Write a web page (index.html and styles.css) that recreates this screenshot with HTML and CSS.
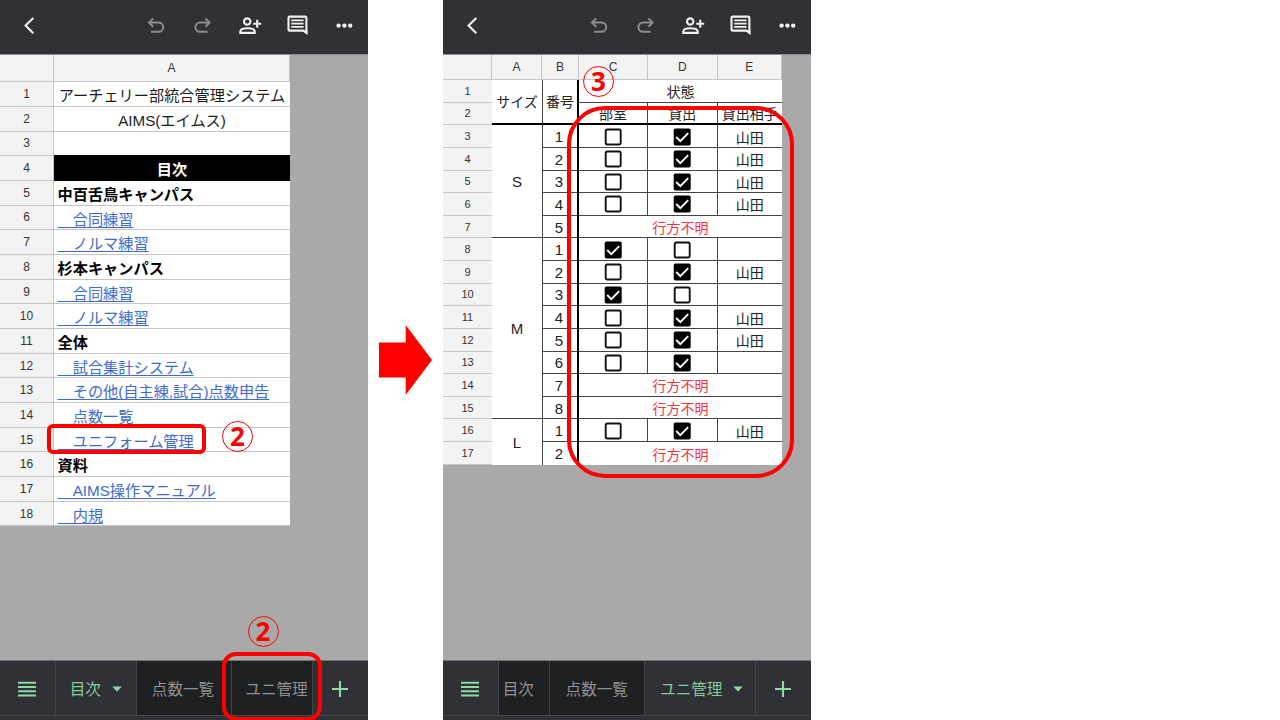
FILE: index.html
```html
<!DOCTYPE html>
<html lang="ja">
<head>
<meta charset="utf-8">
<title>AIMS ユニフォーム管理</title>
<link rel="stylesheet" href="styles.css">
</head>
<body>
<svg class="defs" width="0" height="0">
  <symbol id="tools" viewBox="0 0 368 54">
    <g fill="none" stroke="#f1f1f1" stroke-width="2.1">
      <path d="M33.3 18 25.6 25.6 33.3 33.2"/>
      <g stroke="#8b8c90" stroke-width="2">
        <path d="M153.2 18.4 149 22.6 153.2 26.8M149.4 22.6H158.6A4.6 4.6 0 0 1 158.6 31.8H151"/>
        <path d="M205.4 18.4 209.6 22.6 205.4 26.8M209.2 22.6H200A4.6 4.6 0 0 0 200 31.8H207.6"/>
      </g>
      <circle cx="247.2" cy="21.6" r="3.2"/>
      <path d="M240.3 32.9V31.4C240.3 28.9 244 28.2 247.4 28.2S254.7 28.9 254.7 31.4V32.9Z"/>
      <path d="M257.2 19.7V27.7M253.2 23.7H261.2"/>
      <path d="M289.6 16.6H305.2Q306.4 16.6 306.4 17.8V32.8L303.4 30.6H289.6Q288.5 30.6 288.5 29.4V17.8Q288.5 16.6 289.6 16.6Z"/>
      <path stroke-width="1.7" d="M291.2 20.4H303.6M291.2 23.6H303.6M291.2 26.8H303.6"/>
    </g>
    <path fill="#f1f1f1" d="M302 30.6H307.4V34.8Z"/>
    <g fill="#f1f1f1"><circle cx="338.6" cy="25.6" r="2.2"/><circle cx="344.4" cy="25.6" r="2.2"/><circle cx="350.2" cy="25.6" r="2.2"/></g>
  </symbol>
  <symbol id="list" viewBox="0 0 20 16"><path d="M1 1.8H19M1 6H19M1 10.2H19M1 14.4H19" stroke="#8fd8a7" stroke-width="2"/></symbol>
  <symbol id="plus" viewBox="0 0 18 18"><path d="M9 1V17M1 9H17" stroke="#8fd8a7" stroke-width="2.1"/></symbol>
  <symbol id="caret" viewBox="0 0 10 6"><path d="M.2.4H9.8L5 5.6Z" fill="#8fd8a7"/></symbol>
  <symbol id="off" viewBox="0 0 18 18"><rect x="1.7" y="1.5" width="15" height="15" rx="1.4" fill="#fff" stroke="#111" stroke-width="1.9"/></symbol>
  <symbol id="on" viewBox="0 0 18 18"><rect x=".7" y=".5" width="17" height="17" rx="1.8"/><path d="M3.2 9 7.3 13.1 15.2 5.2" fill="none" stroke="#fff" stroke-width="1.9"/></symbol>
</svg>

<main class="stage">
  <section class="phone">
    <header class="toolbar"><svg width="368" height="54"><use href="#tools"/></svg></header>
    <div class="canvas">
      <div class="index">
        <div class="num"></div><div class="col">A</div>
        <div class="num">1</div><div class="cell center">アーチェリー部統合管理システム</div>
        <div class="num">2</div><div class="cell center">AIMS(エイムス)</div>
        <div class="num">3</div><div class="cell"></div>
        <div class="num">4</div><div class="cell title">目次</div>
        <div class="num">5</div><div class="cell bold">中百舌鳥キャンパス</div>
        <div class="num">6</div><div class="cell"><a>　合同練習</a></div>
        <div class="num">7</div><div class="cell"><a>　ノルマ練習</a></div>
        <div class="num">8</div><div class="cell bold">杉本キャンパス</div>
        <div class="num">9</div><div class="cell"><a>　合同練習</a></div>
        <div class="num">10</div><div class="cell"><a>　ノルマ練習</a></div>
        <div class="num">11</div><div class="cell bold">全体</div>
        <div class="num">12</div><div class="cell"><a>　試合集計システム</a></div>
        <div class="num">13</div><div class="cell"><a>　その他(自主練,試合)点数申告</a></div>
        <div class="num">14</div><div class="cell"><a>　点数一覧</a></div>
        <div class="num">15</div><div class="cell"><a>　ユニフォーム管理</a></div>
        <div class="num">16</div><div class="cell bold">資料</div>
        <div class="num">17</div><div class="cell"><a>　AIMS操作マニュアル</a></div>
        <div class="num">18</div><div class="cell"><a>　内規</a></div>
      </div>
    </div>
    <nav class="tabs tabs-index">
      <div class="tab"><svg width="20" height="16"><use href="#list"/></svg></div>
      <div class="tab active">目次<svg width="10" height="6"><use href="#caret"/></svg></div>
      <div class="tab dark">点数一覧</div>
      <div class="tab dark">ユニ管理</div>
      <div class="tab add"><svg width="18" height="18"><use href="#plus"/></svg></div>
    </nav>
    <div class="mark mark-link"></div>
    <div class="mark mark-tab"></div>
    <div class="step step-link">2</div>
    <div class="step step-tab">2</div>
  </section>

  <div class="between"><svg width="53" height="70" viewBox="0 0 53 70"><path d="M0 17.5H26.7V0L53 35 26.7 70V52.5H0Z" fill="#f00"/></svg></div>

  <section class="phone">
    <header class="toolbar"><svg width="368" height="54"><use href="#tools"/></svg></header>
    <div class="canvas">
      <div class="uniform" id="uniform"></div>
    </div>
    <nav class="tabs tabs-uniform">
      <div class="tab"><svg width="20" height="16"><use href="#list"/></svg></div>
      <div class="tab dark cut">目次</div>
      <div class="tab dark">点数一覧</div>
      <div class="tab active">ユニ管理<svg width="10" height="6"><use href="#caret"/></svg></div>
      <div class="tab add"><svg width="18" height="18"><use href="#plus"/></svg></div>
    </nav>
    <div class="mark mark-table"></div>
    <div class="step step-table">3</div>
  </section>
</main>
<script src="sheet.js"></script>
</body>
</html>
```

FILE: styles.css
```css
* { box-sizing: border-box; }
body { margin: 0; background: #fff; font-family: "Liberation Sans", "Noto Sans CJK JP", sans-serif; }
.defs { position: absolute; }
.stage { display: flex; width: 1280px; height: 720px; overflow: hidden; }
.phone { position: relative; display: flex; flex-direction: column; width: 368px; height: 720px; overflow: hidden; }
.between { display: flex; align-items: center; justify-content: center; width: 75px; }
.toolbar { height: 54px; background: #303136; }
.toolbar svg { display: block; }
.canvas { flex: 1; background: #a9a9a9; border-top: 1px solid #8e8e90; }

.index { display: grid; grid-template-columns: 54px 236px; grid-template-rows: 27.3px repeat(18, 24.68px); width: 290px; }
.num, .col { display: flex; align-items: center; justify-content: center; background: #f3f3f3; color: #333; font-size: 12px; border-right: 1px solid #c6c6c6; border-bottom: 1px solid #c6c6c6; }
.index .num { padding-right: 0; }
.cell { display: flex; align-items: center; padding: 4px 0 0 3.5px; background: #fff; border-bottom: 1px solid #c6c6c6; font-size: 15.2px; line-height: 20px; color: #1c1c1c; white-space: nowrap; }
.center { justify-content: center; padding-left: 0; }
.bold { font-weight: 700; color: #000; }
.title { justify-content: center; padding-left: 0; background: #000; border-color: #000; color: #fff; font-weight: 700; margin-top: -1px; }
.cell a { color: #3f6bcb; text-decoration: underline; text-decoration-thickness: 1px; text-underline-offset: 1.5px; text-decoration-skip-ink: none; white-space: pre; }

.uniform { display: grid; grid-template-columns: 49px 50px 37px 69px 69.5px 64.5px; grid-template-rows: 25px repeat(17, 22.63px); width: 339px; }
.uniform .num { font-size: 11px; border-right: 0; }
.uniform .col { font-size: 12px; padding-bottom: 1px; }
.uniform .corner { border-right: 1px solid #c6c6c6; }
.item { display: flex; align-items: center; justify-content: center; background: #fff; border-right: 1px solid #444; border-bottom: 1px solid #444; font-size: 14px; line-height: 18px; padding-top: 3px; color: #222; white-space: nowrap; }
.item svg { margin-top: -2px; width: 18px; height: 18px; flex: none; }
.item.last { border-right: 0; }
.item.bottom { border-bottom: 0; }
.item.size { border-right: 0; font-size: 15px; padding-top: 1px; }
.item.number { border-left: 1px solid #444; border-right: 2px solid #000; font-size: 15px; padding: 2px 2px 0 0; }
.item.heavy { border-bottom: 2px solid #000; }
.item.size.heading, .item.number.heading { font-size: 14px; padding: 0; }
.item.missing { color: #f3353a; border-right: 0; }

.tabs { display: grid; height: 60px; grid-template-rows: 55px; background: #303136; border-top: 1px solid #707173; color: #8f9093; font-size: 15.6px; }
.tabs-index { grid-template-columns: 55.5px 81.5px 95px 81px 55px; }
.tabs-uniform { grid-template-columns: 55.5px 51.5px 94.5px 111.5px 55px; }
.tab { display: flex; align-items: center; justify-content: center; padding-bottom: 1px; border-right: 1px solid #434449; border-bottom: 1px solid #46474b; white-space: nowrap; }
.tab svg { margin-top: 2px; }
.tab.dark { background: #1f2022; padding-right: 2px; }
.tab.active { color: #86c99b; gap: 11px; }
.tabs-index .dark + .dark { padding-left: 11px; }
.tabs-uniform .active { padding-left: 4px; }
.tabs-uniform .dark { padding-right: 0; }
.tabs-uniform .cut { padding-right: 11px; }
.tab.add { border-right: 0; padding-right: 2px; }

.mark { position: absolute; border: 4px solid #f00; }
.mark-link { left: 47px; top: 424px; width: 159px; height: 30px; border-radius: 6px; }
.mark-tab { left: 222px; top: 652px; width: 100px; height: 69px; border-radius: 14px; }
.mark-table { left: 124px; top: 106px; width: 227px; height: 372px; border-radius: 38px; }
.step { position: absolute; width: 31px; height: 31px; border: 1.3px solid #f00; border-radius: 50%; line-height: 28px; text-align: center; color: #f00; font-family: "Noto Sans", sans-serif; font-weight: 700; font-size: 26px; }
.step-link { left: 222px; top: 421px; }
.step-tab { left: 247.5px; top: 615.5px; }
.step-table { left: 140px; top: 66px; }
```

FILE: sheet.js
```js
const sheet = document.getElementById("uniform");

function put(row, col, className, content, rowSpan = 1, colSpan = 1) {
  const el = document.createElement("div");
  el.className = className;
  el.style.gridArea = `${row} / ${col} / span ${rowSpan} / span ${colSpan}`;
  el.innerHTML = content;
  sheet.append(el);
}

const box = (checked) => `<svg><use href="#${checked ? "on" : "off"}"/></svg>`;

put(1, 1, "num corner", "");
["A", "B", "C", "D", "E"].forEach((name, i) => put(1, i + 2, "col", name));
for (let n = 1; n <= 17; n++) put(n + 1, 1, "num", n);

put(2, 2, "item size heading heavy", "サイズ", 2);
put(2, 3, "item number heading heavy", "番号", 2);
put(2, 4, "item last", "状態", 1, 3);
put(3, 4, "item heavy", "部室");
put(3, 5, "item heavy", "貸出");
put(3, 6, "item heavy last", "貸出相手");

put(4, 2, "item size", "S", 5);
put(9, 2, "item size", "M", 8);
put(17, 2, "item size bottom", "L", 2);

/* Each uniform: number, where it is (room, lent, missing), borrower. */
const uniforms = [
  [1, "lent", "山田"], [2, "lent", "山田"], [3, "lent", "山田"], [4, "lent", "山田"], [5, "missing"],
  [1, "room", ""], [2, "lent", "山田"], [3, "room", ""], [4, "lent", "山田"], [5, "lent", "山田"],
  [6, "lent", ""], [7, "missing"], [8, "missing"],
  [1, "lent", "山田"], [2, "missing"]
];

uniforms.forEach(([number, state, borrower], i) => {
  const row = i + 4;
  const end = i === uniforms.length - 1 ? " bottom" : "";
  put(row, 3, "item number" + end, number);
  if (state === "missing") {
    put(row, 4, "item missing" + end, "行方不明", 1, 3);
    return;
  }
  put(row, 4, "item", box(state === "room"));
  put(row, 5, "item", box(state === "lent"));
  put(row, 6, "item last", borrower);
});
```
